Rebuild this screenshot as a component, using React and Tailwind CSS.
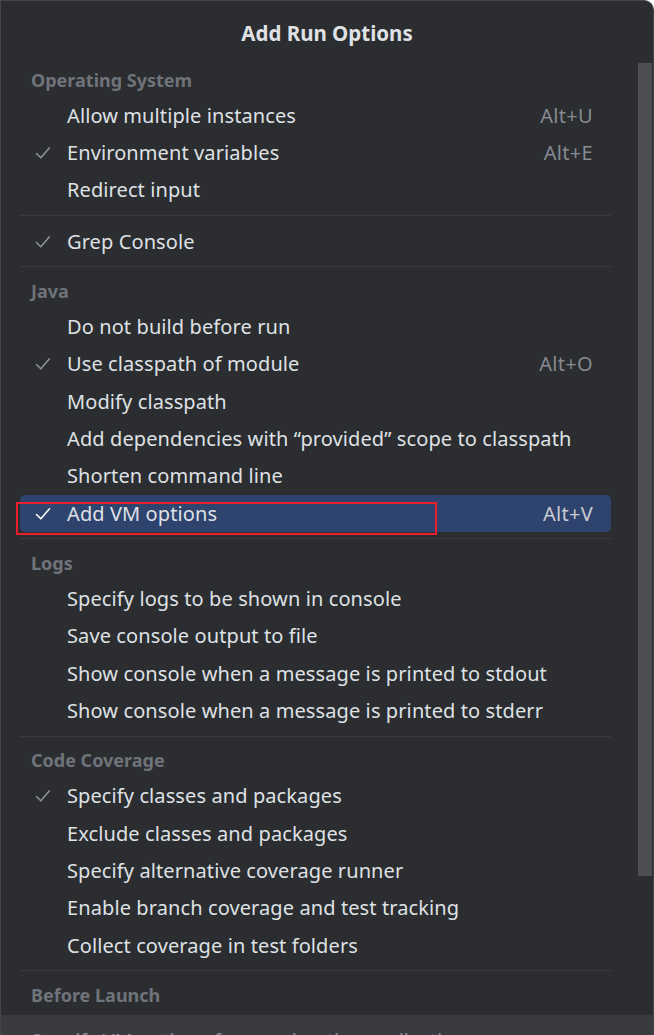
import React from "react";

const Check = ({ white }) => (
  <svg width="16" height="14" viewBox="0 0 16 14" className="shrink-0">
    <path d="M1.5 7.5 L5.8 11.8 L14.5 1.8" fill="none" stroke={white ? "#ffffff" : "#8c8f94"} strokeWidth="1.6" strokeLinecap="round" strokeLinejoin="round" />
  </svg>
);

const Header = ({ children }) => (
  <div className="h-[34px] flex items-center pl-[30px] text-[18px] font-bold text-[#6f737a]">{children}</div>
);

const Sep = () => (
  <div className="h-[14px] pt-[6px] px-[19px]">
    <div className="h-px bg-[#393b40] mr-[23px]"></div>
  </div>
);

const Item = ({ label, checked, shortcut, selected }) => (
  <div className="h-[37.33px] px-[19px] mr-[23px] relative">
    <div className={"h-full flex items-center rounded-[5px] " + (selected ? "bg-[#2e436e]" : "")}>
      <div className="w-[47px] pl-[15px] flex items-center">{checked && <Check white={selected} />}</div>
      <div className="flex-1 text-[#dfe1e5] whitespace-nowrap tracking-[0.1px]">{label}</div>
      {shortcut && <div className={"pr-[18px] tracking-[0.3px] " + (selected ? "text-[#c9ccd3]" : "text-[#868a91]")}>{shortcut}</div>}
    </div>
  </div>
);

export default function App() {
  return (
    <div className="w-[654px] h-[1035px] overflow-hidden bg-[#2b2d30] relative border-l border-t border-r border-[#44464b] rounded-tr-[10px] text-[20px]" style={{ fontFamily: '"Noto Sans", "Open Sans", sans-serif' }}>
      <div className="h-[62px] flex items-center justify-center font-bold text-[#dfe1e5] text-[20.5px] pt-[2px]">Add Run Options</div>
      <div className="relative">
        <Header>Operating System</Header>
        <Item label="Allow multiple instances" shortcut="Alt+U" />
        <Item label="Environment variables" checked shortcut="Alt+E" />
        <Item label="Redirect input" />
        <Sep />
        <Item label="Grep Console" checked />
        <Sep />
        <Header>Java</Header>
        <Item label="Do not build before run" />
        <Item label="Use classpath of module" checked shortcut="Alt+O" />
        <Item label="Modify classpath" />
        <Item label="Add dependencies with “provided” scope to classpath" />
        <Item label="Shorten command line" />
        <Item label="Add VM options" checked shortcut="Alt+V" selected />
        <Sep />
        <Header>Logs</Header>
        <Item label="Specify logs to be shown in console" />
        <Item label="Save console output to file" />
        <Item label="Show console when a message is printed to stdout" />
        <Item label="Show console when a message is printed to stderr" />
        <Sep />
        <Header>Code Coverage</Header>
        <Item label="Specify classes and packages" checked />
        <Item label="Exclude classes and packages" />
        <Item label="Specify alternative coverage runner" />
        <Item label="Enable branch coverage and test tracking" />
        <Item label="Collect coverage in test folders" />
        <Sep />
        <Header>Before Launch</Header>
      </div>
      <div className="absolute left-0 right-0 top-[1014px] h-[40px] bg-[#393b40] pl-[30px] pt-[11px] text-[#868a91] text-[20px] whitespace-nowrap">Specify VM options for running the application</div>
      <div className="absolute right-[1px] top-[62px] w-[14px] h-[813px] bg-[#4d4e52]"></div>
      <div className="absolute left-[15px] top-[501px] w-[421px] h-[33px] border-2 border-[#e8202c]"></div>
    </div>
  );
}
